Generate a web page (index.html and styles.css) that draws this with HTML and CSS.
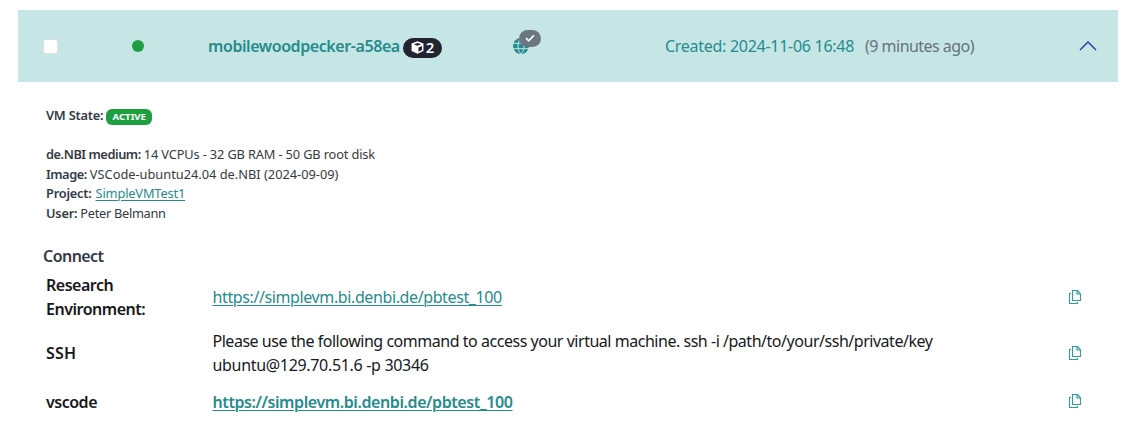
FILE: index.html
```html
<!DOCTYPE html>
<html lang="en">
<head>
<meta charset="utf-8">
<title>Virtual machine overview</title>
<link rel="stylesheet" href="styles.css">
</head>
<body>
<svg class="defs" aria-hidden="true">
  <symbol id="copy" viewBox="0 0 12 14">
    <path d="M3.5.5H8.2L11.5 3.8V10.5H3.5ZM8 .8V4H11.2M2 3.5H.5V13.5H8.5V12" fill="none" stroke="currentColor" stroke-width="1.15"/>
  </symbol>
</svg>
<main class="machine">
  <header class="bar">
    <span class="check" role="checkbox" aria-checked="false"></span>
    <span class="dot"></span>
    <div class="title">
      <a class="name">mobilewoodpecker-a58ea</a>
      <span class="pill">
        <svg class="cube" viewBox="0 0 14 14"><path d="M7 .3 13.4 2.8V10.8L7 13.7.6 10.8V2.8Z" fill="#fff"/><path d="M3 3.6 7 2.1 11 3.6 7 5.2ZM8 7 11.8 5.4V9.8L8 11.6Z" fill="#212531"/></svg>
        <span>2</span>
      </span>
    </div>
    <div class="web">
      <svg class="globe" viewBox="0 0 16 16"><circle cx="8" cy="8" r="8" fill="#258b8c"/><path d="M0 5.3H16M0 10.7H16M8 0C4 3.5 4 12.5 8 16M8 0C12 3.5 12 12.5 8 16" fill="none" stroke="#c6e6e6" stroke-width="1"/></svg>
      <span class="ok"><svg viewBox="0 0 10 8"><path d="M1 4.1 3.7 6.8 9 1.2" fill="none" stroke="#fff" stroke-width="1.6"/></svg></span>
    </div>
    <div class="created"><span class="date">Created: 2024-11-06 16:48</span><span class="ago">(9 minutes ago)</span></div>
    <svg class="chevron" viewBox="0 0 18 10"><path d="M1 9 9 1 17 9" fill="none" stroke="#2b30a0" stroke-width="1.4"/></svg>
  </header>
  <section class="facts">
    <div class="state"><b>VM State:</b><span class="active">ACTIVE</span></div>
    <div class="row"><b class="flavor">de.NBI medium:</b><span class="specs">14 VCPUs - 32 GB RAM - 50 GB root disk</span></div>
    <div class="row"><b class="flavor">Image:</b><span class="image">VSCode-ubuntu24.04 de.NBI (2024-09-09)</span></div>
    <div class="row"><b>Project:</b><a class="project">SimpleVMTest1</a></div>
    <div class="row"><b>User:</b><span class="user">Peter Belmann</span></div>
  </section>
  <h2>Connect</h2>
  <section class="connect">
    <div class="line tall"><b class="label">Research<br>Environment:</b><a class="link">https://simplevm.bi.denbi.de/pbtest_100</a><svg class="copy"><use href="#copy"/></svg></div>
    <div class="line"><b class="label ssh">SSH</b><p><span class="command">Please use the following command to access your virtual machine. ssh -i /path/to/your/ssh/private/key</span><br><span class="host">ubuntu@129.70.51.6 -p 30346</span></p><svg class="copy"><use href="#copy"/></svg></div>
    <div class="line last"><b class="label">vscode</b><a class="link strong">https://simplevm.bi.denbi.de/pbtest_100</a><svg class="copy"><use href="#copy"/></svg></div>
  </section>
</main>
</body>
</html>
```
FILE: styles.css
```css
* { box-sizing: border-box; }
body { margin: 0; background: #fff; font: 16px/24px "Noto Sans", sans-serif; color: #16181b; overflow: hidden; }
.defs { display: none; }
svg { display: block; flex: none; }
b, .name, h2 { font-weight: 600; }
.machine { padding: 10px 7px 0 18px; white-space: nowrap; }
.bar { display: grid; grid-template-columns: 89px 76px 304px 153px 414px 18px; height: 72px; padding-left: 25px; align-items: center; background: #c6e6e6; }
.check { width: 15px; height: 15px; border-radius: 3px; background: #fff; border: 1px solid #dde0e6; }
.dot { width: 12px; height: 12px; border-radius: 50%; background: #1f9f40; }
.title { display: flex; align-items: center; gap: 3px; color: #258b8c; }
.name { letter-spacing: -.42px; }
.pill { display: flex; align-items: center; gap: 2px; height: 20px; width: 39px; margin-top: 3px; padding-left: 8px; border-radius: 10px; background: #212531; color: #fff; font-size: 15px; font-weight: 600; line-height: 18px; }
.cube { width: 13px; height: 13px; margin-bottom: 1px; }
.pill span { height: 20px; }
.web { position: relative; width: 28px; height: 24px; margin-bottom: 9px; }
.globe { width: 16px; height: 16px; margin: 8px 0 0 1px; }
.ok { position: absolute; left: 7px; top: 0; width: 22px; height: 17px; border-radius: 9px; background: #6c7683; display: grid; place-items: center; }
.ok svg { width: 10px; height: 8px; }
.created { display: flex; gap: 11px; }
.date { color: #258b8c; letter-spacing: -.28px; }
.ago { color: #66727b; letter-spacing: -.53px; }
.chevron { width: 18px; height: 10px; }
.facts { padding: 24px 0 0 28px; font-size: 12.8px; line-height: 19.6px; color: #343a45; }
.facts b { letter-spacing: -.22px; }
.facts .flavor { letter-spacing: -.45px; }
.specs { letter-spacing: -.14px; }
.project { margin-left: 1px; letter-spacing: -.15px; }
.user { letter-spacing: -.3px; }
.state { display: flex; align-items: center; gap: 3px; height: 20px; margin-bottom: 19px; }
.active { width: 46px; height: 16px; margin-top: 2px; border-radius: 6px; background: #1f9f40; color: #fff; font-size: 9.6px; font-weight: 700; line-height: 15px; text-align: center; }
.row { display: flex; gap: 3px; }
a.project, .link { color: #258b8c; text-decoration: underline; text-underline-offset: 2px; text-decoration-thickness: 1px; }
h2 { margin: 21px 0 5px 25px; font-size: 16px; line-height: 24px; letter-spacing: -.55px; color: #343a45; }
.connect { padding-left: 28px; }
.line { display: grid; grid-template-columns: 166.5px 856.5px 12px; align-items: center; height: 48px; }
.tall { margin-bottom: 8px; }
.label { letter-spacing: -.48px; }
.ssh { letter-spacing: .2px; }
.line p { margin: 0; }
.command { letter-spacing: -.47px; }
.host { letter-spacing: -.32px; }
.link { letter-spacing: -.39px; }
.strong { font-weight: 600; letter-spacing: -.41px; }
.last .label, .last .link { padding-top: 2px; }
.copy { width: 12px; height: 14px; color: #36979c; }
```
